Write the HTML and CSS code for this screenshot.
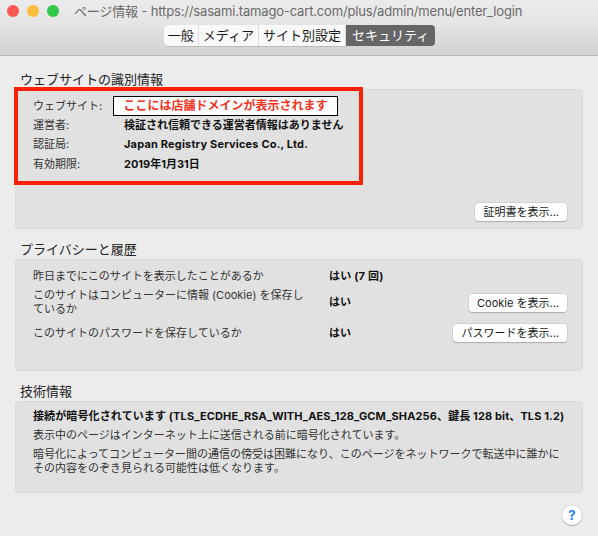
FILE: index.html
```html
<!DOCTYPE html>
<html lang="ja">
<head>
<meta charset="utf-8">
<title>ページ情報</title>
<link rel="stylesheet" href="styles.css">
</head>
<body>
<div class="window">
  <header class="toolbar">
    <div class="titlebar">
      <div class="lights"><i class="light red"></i><i class="light yellow"></i><i class="light green"></i></div>
      <div class="title">ページ情報 - https://sasami.tamago-cart.com/plus/admin/menu/enter_login</div>
    </div>
    <nav class="tabs">
      <span class="tab">一般</span><span class="tab">メディア</span><span class="tab">サイト別設定</span><span class="tab active">セキュリティ</span>
    </nav>
  </header>
  <main class="content">
    <section class="group g1">
      <h2>ウェブサイトの識別情報</h2>
      <div class="panel p1">
        <div class="idgrid">
          <span>ウェブサイト:</span><b class="domain">ここには店舗ドメインが表示されます</b>
          <span>運営者:</span><b>検証され信頼できる運営者情報はありません</b>
          <span>認証局:</span><b class="latin">Japan Registry Services Co., Ltd.</b>
          <span>有効期限:</span><b>2019年1月31日</b>
        </div>
        <div class="actions"><button class="btn">証明書を表示...</button></div>
      </div>
    </section>
    <section class="group g2">
      <h2>プライバシーと履歴</h2>
      <div class="panel p2">
        <div class="row r1"><span class="q">昨日までにこのサイトを表示したことがあるか</span><b class="a latin">はい (7 回)</b></div>
        <div class="row r2"><span class="q">このサイトはコンピューターに情報 (Cookie) を保存しているか</span><b class="a">はい</b><button class="btn">Cookie を表示...</button></div>
        <div class="row r3"><span class="q">このサイトのパスワードを保存しているか</span><b class="a">はい</b><button class="btn">パスワードを表示...</button></div>
      </div>
    </section>
    <section class="group g3">
      <h2>技術情報</h2>
      <div class="panel p3">
        <p class="strong">接続が暗号化されています (TLS_ECDHE_RSA_WITH_AES_128_GCM_SHA256、鍵長 128 bit、TLS 1.2)</p>
        <p class="l1">表示中のページはインターネット上に送信される前に暗号化されています。</p>
        <p class="l2">暗号化によってコンピューター間の通信の傍受は困難になり、このページをネットワークで転送中に誰かにその内容をのぞき見られる可能性は低くなります。</p>
      </div>
    </section>
    <div class="helpbar"><button class="help">?</button></div>
  </main>
  <div class="redbox"></div>
</div>
</body>
</html>
```
FILE: styles.css
```css
* { box-sizing: border-box; }
html, body { margin: 0; padding: 0; }
body {
  width: 598px; height: 536px; overflow: hidden;
  font-family: Inter, "Noto Sans CJK JP", sans-serif;
  font-size: 11px; color: #1c1c1c; background: #ececec;
}
.window { position: relative; width: 598px; height: 536px; }
.toolbar {
  height: 56px;
  background: linear-gradient(#ebebeb 0, #e6e6e6 20px, #d2d2d2 100%);
  border-bottom: 1px solid #b4b4b4;
}
.titlebar { display: flex; align-items: center; height: 21px; padding: 0 0 0 7px; }
.lights { display: flex; gap: 8px; }
.light { display: block; width: 12px; height: 12px; border-radius: 50%; }
.red { background: #fc5753; }
.yellow { background: #fdbc40; }
.green { background: #33c748; }
.title { margin-left: 15px; font-size: 13px; color: #6a6a6a; white-space: nowrap; letter-spacing: -.16px; }
.tabs { display: flex; justify-content: center; margin: 4px 0 0 1px; }
.tab {
  height: 21px; padding: 0 4px; line-height: 20px; font-size: 13px; color: #1a1a1a;
  background: #f9f9f9; border-right: 1px solid #dcdcdc;
  box-shadow: 0 1px 0 #bcbcbc;
}
.tab:first-child { border-radius: 4px 0 0 4px; }
.tab.active {
  background: #666; color: #fff; border: 0; border-radius: 0 4px 4px 0;
  padding: 0 6px; box-shadow: none;
}
.content { padding: 15px 15px 0; }
.group h2 { margin: 0; height: 18px; padding-left: 5px; font-size: 13px; font-weight: 400; line-height: 16px; color: #222; }
.panel {
  background: #e1e1e1; border: 1px solid #dadada; border-radius: 4px;
  width: 568px;
}
.g2 { margin-top: 12px; }
.g3 { margin-top: 12px; }
.p1 { height: 140px; padding: 6px 15px 0 17px; }
.idgrid {
  display: grid; grid-template-columns: 91px auto; justify-content: start;
  grid-auto-rows: 19.3px; align-items: center; line-height: 16px; color: #333;
}
.idgrid b { color: #111; font-weight: 700; }
.idgrid .latin { letter-spacing: .18px; }
.idgrid .domain {
  width: 225px; height: 20px; line-height: 18px; margin-left: -11px;
  background: #fff; border: 1px solid #000;
  color: #f5321e; font-size: 12px; text-align: center;
}
.actions { display: flex; justify-content: flex-end; margin-top: 30px; }
.btn {
  height: 18px; padding: 0 8px; border: 0; border-radius: 4px; background: #fff;
  box-shadow: 0 0 0 .5px #c4c4c4, 0 1px 1px #9a9a9a;
  font: 11px Inter, "Noto Sans CJK JP", sans-serif; line-height: 16px; color: #1a1a1a;
}
.p2 { height: 112px; padding: 6px 15px 0 17px; }
.row { display: flex; align-items: center; color: #333; line-height: 14px; }
.row .q { width: 296px; flex: none; padding-right: 18px; }
.row .a { color: #111; flex: none; }
.row .a.latin { letter-spacing: .2px; }
.row .btn { margin-left: auto; }
.r1 { height: 19px; }
.r2 { height: 33px; }
.r2 .btn { margin-top: 2px; }
.r2 .q { line-height: 14px; }
.r3 { height: 28px; margin-top: 1px; }
.p3 { height: 92px; padding: 7px 15px 0 17px; color: #333; line-height: 14px; }
.p3 p { margin: 0; white-space: normal; }
.p3 .strong { color: #111; font-weight: 700; white-space: nowrap; letter-spacing: .12px; }
.p3 .l1 { margin-top: 5px; }
.p3 .l2 { margin-top: 5px; width: 535px; }
.helpbar { display: flex; justify-content: flex-end; margin-top: 12px; padding-right: 1px; }
.help {
  width: 20px; height: 20px; padding: 0; border: 0; border-radius: 50%; background: #fff;
  box-shadow: 0 0 0 .5px #c4c4c4, 0 1px 1px #a0a0a0;
  color: #1e7cf5; font: 700 13px Inter, sans-serif;
}
.redbox {
  position: absolute; left: 14px; top: 87px; width: 349px; height: 98px;
  border: 4px solid #fb2106; pointer-events: none;
}
```
